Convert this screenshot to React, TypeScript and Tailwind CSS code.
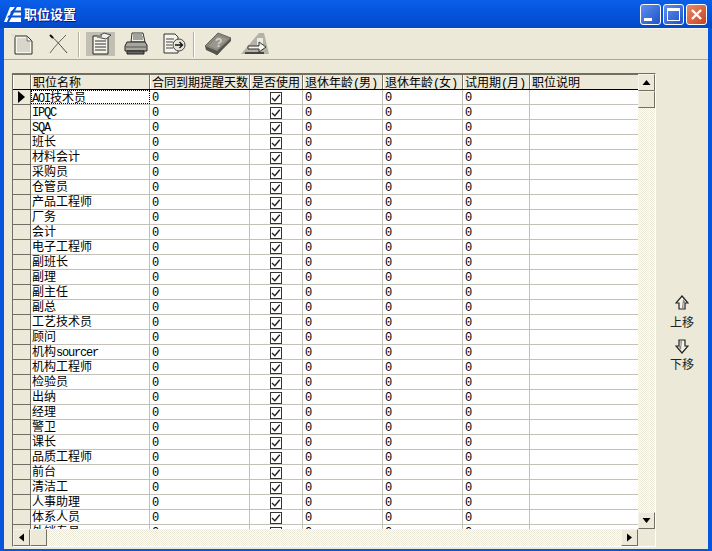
import React from "react";

const ROWS = [
  "AOI技术员", "IPQC", "SQA", "班长", "材料会计", "采购员", "仓管员", "产品工程师", "厂务", "会计",
  "电子工程师", "副班长", "副理", "副主任", "副总", "工艺技术员", "顾问", "机构sourcer", "机构工程师", "检验员",
  "出纳", "经理", "警卫", "课长", "品质工程师", "前台", "清洁工", "人事助理", "体系人员", "外销专员",
];

// Splits latin runs out so they take half of a CJK cell, as the bitmap font does
const Label: React.FC<{ text?: string }> = ({ text = "" }) => (
  <>
    {text.split(/([A-Za-z0-9()]+)/).map((part, i) =>
      /^[A-Za-z0-9()]+$/.test(part) ? (
        <span key={i} className="font-['Liberation_Mono',monospace] text-[12px] tracking-[-1.2px]">{part}</span>
      ) : (
        <span key={i}>{part}</span>
      )
    )}
  </>
);

const HeaderCell: React.FC<{ w: string; text?: string }> = ({ w, text }) => (
  <div className={`${w} shrink-0 h-full pl-[1px] border-r border-r-[#716f64] border-l border-l-white whitespace-nowrap leading-[13px]`}>
    <Label text={text} />
  </div>
);

const Cell: React.FC<{ w: string; children?: React.ReactNode; focus?: boolean }> = ({ w, children, focus }) => (
  <div className={`${w} shrink-0 h-full whitespace-nowrap leading-[12px] ${focus ? "border border-dotted border-black" : "pl-[1px] border-r border-r-[#c4c2b8]"}`}>
    {children}
  </div>
);

const Zero = () => <span className="font-['Liberation_Mono',monospace] text-[12px] text-black pl-[1px]">0</span>;

const Checkbox = () => (
  <div className="mx-auto w-[12px] h-[12px] border border-[#333] bg-white flex items-center justify-center">
    <svg width="10" height="10" viewBox="0 0 10 10" fill="none" stroke="#222" strokeWidth="1.4">
      <path d="M1 5 L3.8 7.8 L8.8 1.8" />
    </svg>
  </div>
);

const Row: React.FC<{ name: string; first?: boolean }> = ({ name, first }) => (
  <div className="flex h-[15px] shrink-0 border-b border-b-[#c4c2b8] bg-white">
    <div className="w-[18px] shrink-0 h-[15px] bg-[#ece9d8] border-b border-b-[#716f64] border-r border-r-[#716f64] flex items-center justify-center">
      {first && (
        <svg width="9" height="12" viewBox="0 0 9 12"><path d="M1 0 L8 6 L1 12 Z" fill="#000" /></svg>
      )}
    </div>
    <Cell w="w-[119px]" focus={first}><Label text={name} /></Cell>
    <Cell w="w-[100px]"><Zero /></Cell>
    <div className="w-[53px] shrink-0 h-full border-r border-r-[#c4c2b8] pt-[2px]"><Checkbox /></div>
    <Cell w="w-[80px]"><Zero /></Cell>
    <Cell w="w-[80px]"><Zero /></Cell>
    <Cell w="w-[67px]"><Zero /></Cell>
    <div className="flex-1 h-full" />
  </div>
);

const ScrollBtn: React.FC<{ d?: string }> = ({ d }) => (
  <div className="w-[17px] h-[17px] shrink-0 bg-[#ece9d8] border border-[#f5f3ea] border-r-[#716f64] border-b-[#716f64] flex items-center justify-center">
    {d && (
      <svg width="9" height="9" viewBox="0 0 9 9"><path d={d} fill="#000" /></svg>
    )}
  </div>
);

const Dither = "bg-[repeating-conic-gradient(#ffffff_0_25%,#ece9d8_0_50%)] bg-[length:2px_2px]";

const ToolBtn: React.FC<{ w: string; active?: boolean; children: React.ReactNode }> = ({ w, active, children }) => (
  <div className={`${w} h-[24px] shrink-0 flex items-center justify-center ${active ? "bg-[#c2bfb2]" : ""}`}>{children}</div>
);

const ToolSep = () => <div className="w-[2px] h-[25px] shrink-0 bg-[#b5b2a2] border-r border-r-white" />;

const NewIcon = () => (
  <svg width="24" height="24" viewBox="0 0 24 24">
    <path d="M5 4 H17 L22 9 V22 H5 Z" fill="#f8f7ee" stroke="#2a2a2a" />
    <path d="M7 6 H16 L20 10 V20 H7 Z" fill="#d8d6cc" />
    <path d="M17 4 V9 H22" fill="none" stroke="#777" />
    <path d="M1 2 L5 5 M5 2 L2 5" stroke="#ddd" strokeWidth="1.5" />
  </svg>
);

const DeleteIcon = () => (
  <svg width="22" height="22" viewBox="0 0 22 22" fill="none">
    <path d="M3 2 C8 6 14 13 20 20" stroke="#444" strokeWidth="1" />
    <path d="M19 2 C14 7 8 13 3 20" stroke="#666" strokeWidth="1" />
    <path d="M3 2 L6 5" stroke="#111" strokeWidth="2" />
  </svg>
);

const PropsIcon = () => (
  <svg width="24" height="24" viewBox="0 0 24 24">
    <path d="M4 4 H19 V22 H4 Z" fill="#f4f3ea" stroke="#222" />
    <path d="M6 9 H17 M6 12 H17 M6 15 H17 M6 18 H17" stroke="#333" />
    <path d="M8 5 L15 1 L22 3 L17 7 Z" fill="#eee" stroke="#444" />
    <rect x="8" y="3" width="5" height="3" fill="#888" />
  </svg>
);

const PrintIcon = () => (
  <svg width="24" height="24" viewBox="0 0 24 24">
    <path d="M8 1 H19 L21 10 H7 Z" fill="#f2f1e8" stroke="#333" />
    <path d="M9 3 H18 M9 5 H19 M9 7 H19" stroke="#555" />
    <path d="M3 10 H21 L23 13 V19 H1 V14 Z" fill="#a8a69c" stroke="#222" />
    <path d="M2 15 H22" stroke="#555" />
    <path d="M3 19 H20 V22 H3 Z" fill="#666" stroke="#222" />
  </svg>
);

const ExportIcon = () => (
  <svg width="24" height="24" viewBox="0 0 24 24">
    <path d="M2 2 H13 L16 5 V21 H2 Z" fill="#f6f5ec" stroke="#333" />
    <path d="M4 7 H12 M4 10 H11 M4 13 H10 M4 16 H11" stroke="#444" />
    <circle cx="17" cy="13" r="6" fill="#e6e4d8" stroke="#444" />
    <path d="M13 13 H20 M17.5 10 L20.5 13 L17.5 16" fill="none" stroke="#111" strokeWidth="1.3" />
  </svg>
);

const HelpIcon = () => (
  <svg width="28" height="24" viewBox="0 0 28 24">
    <path d="M1 14 L14 1 L27 6 L13 23 Z" fill="#8a887e" stroke="#66665e" />
    <path d="M1 14 L13 19 L27 6 V9 L13 23 L2 18 Z" fill="#55554e" />
    <path d="M5 14 L14 4 L23 7 L13 17 Z" fill="#9a988e" />
    <text x="11" y="15" fontSize="12" fontWeight="700" fill="#d8d6ca" fontFamily="Liberation Sans, sans-serif">?</text>
  </svg>
);

const ExitIcon = () => (
  <svg width="30" height="24" viewBox="0 0 30 24">
    <path d="M1 22 L19 1 H24 L29 22 Z" fill="#b4b2a6" />
    <path d="M17 6 H23 V13 H17 Z" fill="#ecebe0" />
    <path d="M8 14 H19 V10 L26 15 L19 20 V17 H8 Z" fill="#f4f3ea" stroke="#333" />
    <path d="M5 21 H24" stroke="#222" strokeWidth="1.5" />
  </svg>
);

const AppLogo = () => (
  <svg width="17" height="15" viewBox="0 0 17 15">
    <path d="M6 0 H17 V15 H0 Z" fill="#fff" />
    <path d="M8 3.5 L17 3.5 V5.5 L6 5.5 Z M4.5 8.5 L17 8.5 V10.5 L3 10.5 Z" fill="#0a4fd0" />
    <path d="M7 5 L11 0 H13 L5 15 H3 Z" fill="#0a4fd0" />
  </svg>
);

const CaptionBtn: React.FC<{ cls: string; children: React.ReactNode }> = ({ cls, children }) => (
  <div className={`w-[21px] h-[21px] shrink-0 rounded-[3px] border border-white flex items-center justify-center ${cls}`}>{children}</div>
);

const MoveArrow: React.FC<{ up?: boolean }> = ({ up }) => (
  <svg width="14" height="15" viewBox="0 0 14 15" className={up ? "" : "rotate-180"}>
    <path d="M7 1 L13 8 H10 V14 H4 V8 H1 Z" fill="#f4f3ea" stroke="#222" strokeWidth="1.2" />
    <path d="M8 4 L11 8 H8.5 V13 H7 Z" fill="#8c8a7e" />
  </svg>
);

export default function App() {
  return (
    <div className="w-[712px] h-[551px] flex flex-col bg-[#0855dd] overflow-hidden font-['Noto_Sans_CJK_SC',sans-serif] text-[12px] text-black">
      {/* Title bar */}
      <div className="h-[28px] shrink-0 flex items-center pl-[4px] pr-[4px] bg-gradient-to-b from-[#0a5fe8] via-[#0553dc] to-[#0349c8]">
        <AppLogo />
        <span className="ml-[3px] mb-[1px] leading-[16px] text-white font-bold text-[13px] [text-shadow:1px_1px_0_#0f1089]">职位设置</span>
        <div className="ml-auto flex gap-[2px] mr-[1px]">
          <CaptionBtn cls="bg-gradient-to-br from-[#5f90f0] to-[#2050c8]">
            <div className="w-[8px] h-[3px] bg-white mt-[10px] mr-[5px]" />
          </CaptionBtn>
          <CaptionBtn cls="bg-gradient-to-br from-[#5f90f0] to-[#2050c8]">
            <div className="w-[13px] h-[13px] border border-white border-t-[3px]" />
          </CaptionBtn>
          <CaptionBtn cls="bg-gradient-to-br from-[#e88a68] to-[#c8401c]">
            <svg width="13" height="13" viewBox="0 0 13 13" stroke="#fff" strokeWidth="2.4">
              <path d="M2 2 L11 11 M11 2 L2 11" />
            </svg>
          </CaptionBtn>
        </div>
      </div>

      {/* Client area */}
      <div className="flex-1 mx-[4px] mb-[2px] flex flex-col bg-[#ece9d8] min-h-0">
        {/* Toolbar */}
        <div className="h-[32px] shrink-0 flex items-center pl-[4px] border-t border-t-[#f7f5ec] border-b border-b-[#aca899]">
          <ToolBtn w="w-[28px]"><NewIcon /></ToolBtn>
          <div className="w-[10px]" />
          <ToolBtn w="w-[24px]"><DeleteIcon /></ToolBtn>
          <div className="w-[8px]" />
          <ToolSep />
          <div className="w-[6px]" />
          <ToolBtn w="w-[29px]" active><PropsIcon /></ToolBtn>
          <div className="w-[8px]" />
          <ToolBtn w="w-[25px]"><PrintIcon /></ToolBtn>
          <div className="w-[13px]" />
          <ToolBtn w="w-[25px]"><ExportIcon /></ToolBtn>
          <div className="w-[7px]" />
          <ToolSep />
          <div className="w-[8px]" />
          <ToolBtn w="w-[30px]"><HelpIcon /></ToolBtn>
          <div className="w-[6px]" />
          <ToolBtn w="w-[31px]"><ExitIcon /></ToolBtn>
        </div>

        {/* Body */}
        <div className="flex-1 flex min-h-0 pt-[13px] pl-[8px] pb-[2px]">
          <div className="w-[644px] shrink-0 flex flex-col border border-t-[#716f64] border-l-[#716f64] border-r-white border-b-white min-h-0">
            <div className="flex-1 flex min-h-0">
              <div className="flex-1 flex flex-col min-w-0 overflow-hidden bg-white">
                <div className="flex h-[16px] shrink-0 bg-[#ece9d8] border-b border-b-black border-t border-t-[#716f64]">
                  <HeaderCell w="w-[18px]" />
                  <HeaderCell w="w-[119px]" text="职位名称" />
                  <HeaderCell w="w-[100px]" text="合同到期提醒天数" />
                  <HeaderCell w="w-[53px]" text="是否使用" />
                  <HeaderCell w="w-[80px]" text="退休年龄(男)" />
                  <HeaderCell w="w-[80px]" text="退休年龄(女)" />
                  <HeaderCell w="w-[67px]" text="试用期(月)" />
                  <div className="flex-1 pl-[1px] border-l border-l-white leading-[13px]">职位说明</div>
                </div>
                {ROWS.map((name, i) => (
                  <Row key={name} name={name} first={i === 0} />
                ))}
              </div>
              {/* Vertical scrollbar */}
              <div className={`w-[17px] shrink-0 flex flex-col ${Dither}`}>
                <ScrollBtn d="M4.5 2 L8.5 7 H0.5 Z" />
                <ScrollBtn />
                <div className="flex-1" />
                <ScrollBtn d="M4.5 7 L8.5 2 H0.5 Z" />
              </div>
            </div>
            {/* Horizontal scrollbar */}
            <div className="h-[17px] shrink-0 flex">
              <ScrollBtn d="M2 4.5 L7 0.5 V8.5 Z" />
              <ScrollBtn />
              <div className={`flex-1 ${Dither}`} />
              <ScrollBtn d="M7 4.5 L2 0.5 V8.5 Z" />
              <div className="w-[17px] shrink-0 bg-[#ece9d8]" />
            </div>
          </div>

          {/* Move buttons */}
          <div className="flex-1 flex flex-col items-center pt-[222px] leading-[14px] text-[#222]">
            <MoveArrow up />
            <span className="mt-[5px]">上移</span>
            <div className="mt-[10px]"><MoveArrow /></div>
            <span className="mt-[3px]">下移</span>
          </div>
        </div>
      </div>
    </div>
  );
}
